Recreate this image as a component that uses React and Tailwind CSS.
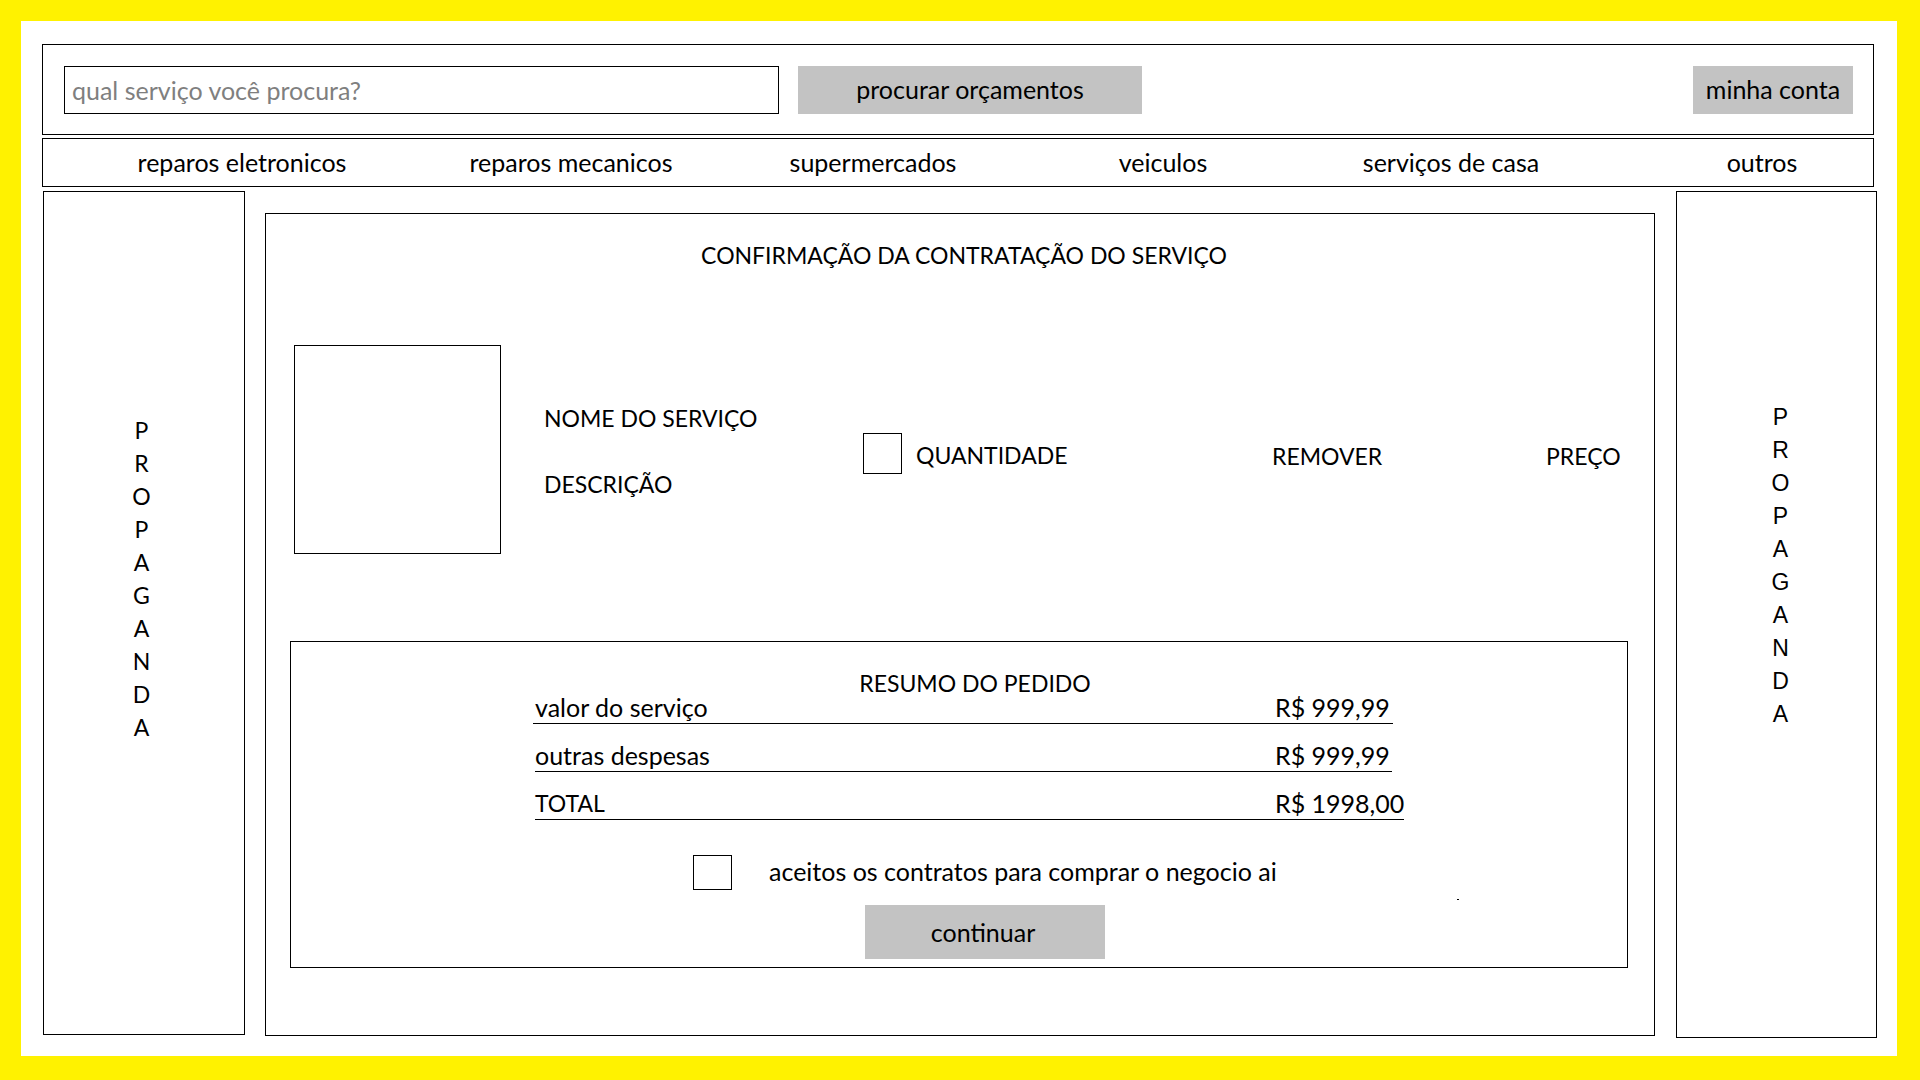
export default function App() {
  const navItems = [
    { label: "reparos eletronicos", cls: "ml-[69px]" },
    { label: "reparos mecanicos", cls: "ml-[69px]" },
    { label: "supermercados", cls: "ml-[42px]" },
    { label: "veiculos", cls: "ml-[30px]" },
    { label: "serviços de casa", cls: "ml-[28px]" },
    { label: "outros", cls: "ml-[51px]" },
  ];
  const letters = "PROPAGANDA".split("");
  const UP = "text-[23px]";
  return (
    <div className="w-[1920px] h-[1080px] bg-[#fff200] pt-[21px] pl-[21px] pr-[23px] pb-[24px] font-[Lato,sans-serif] text-[25px] text-black">
      <div className="w-full h-full bg-white pt-[23px] pl-[21px] pr-[23px]">
        {/* header */}
        <div className="h-[91px] border border-black flex items-start pt-[21px] pl-[21px] pr-[20px]">
          <div className="w-[715px] h-[48px] shrink-0 border border-black flex items-center pl-[7px] text-[#7f7f7f] leading-[30px]">
            qual serviço você procura?
          </div>
          <div className="ml-[19px] w-[344px] h-[48px] shrink-0 bg-[#c3c3c3] flex items-center justify-center pb-[3px] leading-[30px]">
            procurar orçamentos
          </div>
          <div className="ml-auto w-[160px] h-[48px] shrink-0 bg-[#c3c3c3] flex items-center justify-center pb-[2px] leading-[30px]">
            minha conta
          </div>
        </div>

        {/* nav */}
        <div className="mt-[3px] h-[49px] border border-black flex items-center pb-[2px] leading-[30px]">
          {navItems.map((n) => (
            <div key={n.label} className={`${n.cls} w-[260px] shrink-0 text-center whitespace-nowrap`}>
              {n.label}
            </div>
          ))}
        </div>

        {/* body row */}
        <div className="mt-[4px] ml-[1px] flex items-start">
          {/* left ad */}
          <div className={`w-[202px] h-[844px] shrink-0 border border-black pt-[222px] pr-[5px] flex flex-col items-center leading-[33px] ${UP}`}>
            {letters.map((l, i) => (
              <div key={i}>{l}</div>
            ))}
          </div>

          {/* main */}
          <div className="ml-[20px] mt-[22px] w-[1390px] h-[823px] shrink-0 border border-black flex flex-col">
            <div className={`pt-[26px] pl-[8px] text-center leading-[30px] ${UP}`}>
              CONFIRMAÇÃO DA CONTRATAÇÃO DO SERVIÇO
            </div>

            {/* product row */}
            <div className={`mt-[75px] ml-[28px] flex items-start leading-[30px] ${UP}`}>
              <div className="w-[207px] h-[209px] shrink-0 border border-black" />
              <div className="ml-[43px] w-[319px] shrink-0 pt-[58px] flex flex-col">
                <div>NOME DO SERVIÇO</div>
                <div className="mt-[36px]">DESCRIÇÃO</div>
              </div>
              <div className="mt-[88px] flex items-center h-[41px]">
                <div className="w-[39px] h-[41px] shrink-0 border border-black" />
                <div className="ml-[14px] w-[356px] shrink-0 pt-[3px]">QUANTIDADE</div>
                <div className="w-[274px] shrink-0 pt-[4px]">REMOVER</div>
                <div className="shrink-0 pt-[4px]">PREÇO</div>
              </div>
            </div>

            {/* summary */}
            <div className="relative mt-[87px] ml-[24px] w-[1338px] h-[327px] border border-black leading-[24px]">
              <div className={`pt-[29px] pl-[32px] text-center ${UP}`}>RESUMO DO PEDIDO</div>

              <div className="mt-[0px] ml-[242px] w-[860px] flex border-b border-black pb-[4px]">
                <span className="w-[742px] shrink-0 pl-[2px]">valor do serviço</span>
                <span className="whitespace-nowrap">R$ 999,99</span>
              </div>
              <div className="mt-[19px] ml-[244px] w-[857px] flex border-b border-black pb-[4px]">
                <span className="w-[740px] shrink-0">outras despesas</span>
                <span className="whitespace-nowrap">R$ 999,99</span>
              </div>
              <div className="mt-[19px] ml-[244px] w-[869px] flex border-b border-black pb-[4px]">
                <span className={`w-[740px] shrink-0 ${UP}`}>TOTAL</span>
                <span className="whitespace-nowrap">R$ 1998,00</span>
              </div>

              <div className="mt-[35px] ml-[402px] flex items-center h-[35px]">
                <div className="w-[39px] h-[35px] shrink-0 border border-black" />
                <div className="ml-[37px] pb-[3px] whitespace-nowrap">aceitos os contratos para comprar o negocio ai</div>
              </div>

              <div className="mt-[15px] ml-[574px] w-[240px] h-[54px] bg-[#c3c3c3] flex items-center justify-center pr-[4px]">
                continuar
              </div>

              <div className="absolute left-[1166px] top-[257px] w-[2px] h-[1px] bg-black" />
            </div>
          </div>

          {/* right ad */}
          <div className="ml-[21px] w-[201px] h-[847px] shrink-0 border border-black pt-[209px] pl-[8px] flex flex-col items-center leading-[33px] font-['Liberation_Sans',Arial,sans-serif] text-[23px]">
            {letters.map((l, i) => (
              <div key={i}>{l}</div>
            ))}
          </div>
        </div>
      </div>
    </div>
  );
}
